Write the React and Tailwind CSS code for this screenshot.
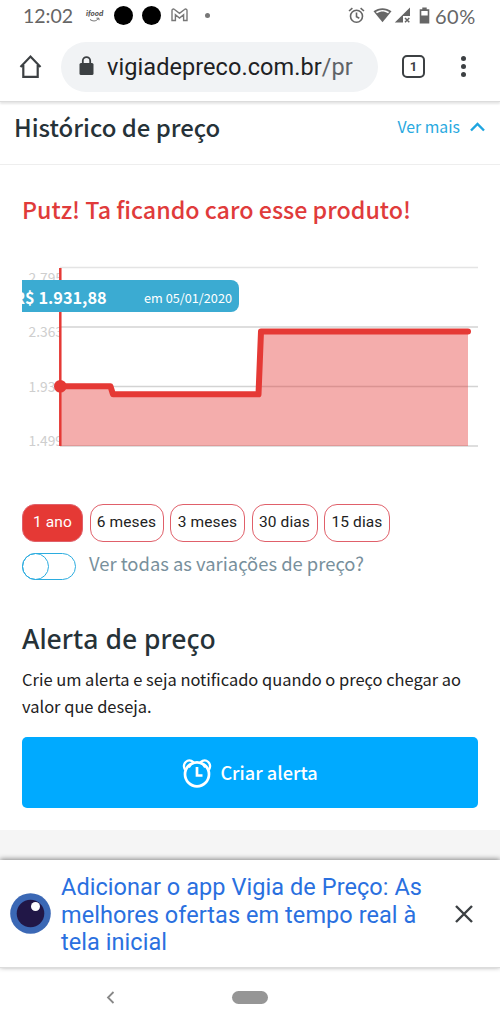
import { useState } from "react";

const periods = [
  { label: "1 ano", width: "w-[61px]" },
  { label: "6 meses", width: "w-[74px]" },
  { label: "3 meses", width: "w-[75px]" },
  { label: "30 dias", width: "w-[66px]" },
  { label: "15 dias", width: "w-[66px]" },
];

// grid lines and their labels
const grid = [
  { y: 267.5, textY: 282.5, label: "2.795", color: "#e4e4e4" },
  { y: 327, textY: 337, label: "2.363", color: "#d3d3d3" },
  { y: 386.5, textY: 392, label: "1.931", color: "#d3d3d3" },
  { y: 446, textY: 445.5, label: "1.499", color: "#d3d3d3" },
];

function StatusBar() {
  return (
    <div className="flex h-[32px] items-center justify-between pl-[23px] pr-[24px] font-['Lato',sans-serif] text-[20px] text-[#666]">
      <div className="flex items-center">
        <span className="w-[63px] pb-[1px] text-[19.500px]">12:02</span>
        <span className="relative flex h-5 w-[28px] flex-col">
          <span className="pt-[1px] text-[8px] leading-[13px] font-black italic text-[#555]">ifood</span>
          <svg className="absolute top-[11px] left-[3px]" width="12" height="5" viewBox="0 0 12 5" fill="none" stroke="#666" strokeWidth="1">
            <path d="M1 2.500C4 4.500 7 4.500 9.500 1.500M7.500 1.200l2.300 0 .3 2" />
          </svg>
        </span>
        <span className="mr-[9px] -mt-[2px] h-[19px] w-[19px] rounded-full bg-black" />
        <span className="-mt-[2px] h-[19px] w-[19px] rounded-full bg-black" />
        <svg className="-mt-[2px] ml-[10px]" width="17" height="14" viewBox="0 0 17 14" fill="none" stroke="#777" strokeWidth="1.400">
          <path d="M1 2.500C1 1 2.500.7 3.500 1.500l5 3.800 5-3.800c1-.8 2.500-.5 2.500 1V12.500h-3.400V6.800L8.500 10 4.400 6.800v5.700H1z" />
        </svg>
        <span className="-mt-[2px] ml-[17px] h-[5px] w-[5px] rounded-full bg-[#777]" />
      </div>
      <div className="flex items-center">
        <svg className="-mt-[2px]" width="17" height="17" viewBox="0 0 17 17" fill="none" stroke="#666" strokeWidth="1.600">
          <circle cx="8.500" cy="9.300" r="6" />
          <path d="M1 4l3.400-2.900M16 4l-3.400-2.900M8.500 5.500v4.200l2.800 1.600" />
        </svg>
        <svg className="-mt-[2px] ml-[8px]" width="19" height="16" viewBox="0 0 19 16">
          <path d="M.5 4.200C6 .1 13 .1 18.500 4.200L9.500 15.300z" fill="#666" />
          <path d="M2.800 4.900C7 2.200 12 2.200 16.200 4.900L15 6.200C11 4 8 4 4 6.200z" fill="#fff" />
        </svg>
        <svg className="-mt-[2px] ml-[2px]" width="17" height="16" viewBox="0 0 17 16">
          <path d="M16 .5V9H9v6.500H.8z" fill="#666" />
          <path d="M11 11l4.300 4.300M15.300 11L11 15.300" stroke="#666" strokeWidth="1.500" />
        </svg>
        <svg className="-mt-[2px] ml-[8px]" width="11" height="17" viewBox="0 0 11 17">
          <path d="M3.300.5h4.400v1.800h2.600v14.200H.7V2.300h2.600z" fill="#666" />
          <path d="M2.300 4h6.400v4.500H2.300z" fill="#fff" />
        </svg>
        <span className="ml-[5px] w-[41px] pb-[1px] whitespace-nowrap tracking-[0.500px]">60%</span>
      </div>
    </div>
  );
}

function AddressBar() {
  return (
    <div className="relative z-10 flex h-[70px] items-center border-b border-[#dcdcdc] bg-white shadow-[0_2px_2px_rgba(0,0,0,0.1)]">
      <svg className="ml-[19px]" width="24" height="25" viewBox="0 0 24 25" fill="none" stroke="#3c4043" strokeWidth="2.200">
        <path d="M1.500 13L11.500 2.600 21.500 13M4.300 11V22.800H18.700V11" />
      </svg>
      <div className="ml-[18px] flex h-[50px] w-[317px] items-center rounded-full bg-[#f1f3f5] pl-[18px]">
        <svg className="-mt-[2px]" width="15" height="20" viewBox="0 0 15 20">
          <rect x=".5" y="7" width="14" height="12" rx="1.500" fill="#3c4043" />
          <path d="M3.800 8V4.800a3.700 3.700 0 017.400 0V8" fill="none" stroke="#3c4043" strokeWidth="1.800" />
        </svg>
        <span className="ml-[13px] pt-[2px] whitespace-nowrap font-['Roboto',sans-serif] text-[23.500px] leading-none tracking-[0.070px] text-[#202124]">
          vigiadepreco.com.br<span className="text-[#5f6368]">/pr</span>
        </span>
      </div>
      <div className="ml-[24px] flex h-[23px] w-[23px] items-center justify-center rounded-[5px] border-[2.500px] border-[#3c4043] font-['Roboto',sans-serif] text-[13px] font-bold text-[#3c4043]">
        1
      </div>
      <div className="ml-[36px] flex flex-col gap-[3px]">
        <span className="h-[5px] w-[5px] rounded-full bg-[#3c4043]" />
        <span className="h-[5px] w-[5px] rounded-full bg-[#3c4043]" />
        <span className="h-[5px] w-[5px] rounded-full bg-[#3c4043]" />
      </div>
    </div>
  );
}

function PriceChart() {
  return (
    <div className="relative mt-[33px] h-[192px]">
      <svg width="456" height="192" viewBox="22 260 456 192">
        <clipPath id="labels">
          <rect x="22" y="260" width="39" height="192" />
        </clipPath>
        <g clipPath="url(#labels)" fill="#cecece" fontSize="13.800" fontFamily="'Noto Sans CJK JP', sans-serif">
          {grid.map((g) => (
            <text key={g.label} x="28.500" y={g.textY}>
              {g.label}
            </text>
          ))}
        </g>
        {grid.map((g) => (
          <path key={g.y} d={`M60 ${g.y}H478`} stroke={g.color} strokeWidth="1.500" />
        ))}
        <path d="M60 386.300H110L113 394.500H258L261 331.500H468V446H60z" fill="#e53935" fillOpacity="0.410" />
        <path d="M60.300 268V446" stroke="#e53935" strokeWidth="2.500" />
        <path
          d="M60 386.300H110.500L113 394.300H258.500L261 331.500H468"
          fill="none"
          stroke="#e53935"
          strokeWidth="6"
          strokeLinecap="round"
          strokeLinejoin="round"
        />
        <circle cx="60.300" cy="386.300" r="6.300" fill="#e53935" />
      </svg>
      {/* tooltip */}
      <div className="absolute top-[20px] left-0 flex h-[32px] w-[217px] items-center justify-between overflow-hidden rounded-r-[8px] bg-[#3babd2] pr-[7px] text-white">
        <span className="-ml-[8px] whitespace-nowrap pt-[2px] text-[16.300px] font-bold">R$ 1.931,88</span>
        <span className="pt-[4px] whitespace-nowrap text-[12.700px]">em 05/01/2020</span>
      </div>
    </div>
  );
}

function InstallBanner() {
  return (
    <div className="relative flex h-[108px] items-center border-b border-[#dcdcdc] bg-white shadow-[0_-1px_5px_rgba(0,0,0,0.450)]">
      <svg className="ml-[10px] shrink-0" width="41" height="41" viewBox="0 0 41 41">
        <circle cx="20.500" cy="20.500" r="20.300" fill="#3b68b5" />
        <circle cx="20.500" cy="20.500" r="13.800" fill="#211747" />
        <circle cx="25.500" cy="13.500" r="4.500" fill="#fff" />
      </svg>
      <p className="ml-[10px] w-[380px] pt-[4px] whitespace-nowrap font-['Roboto',sans-serif] text-[23.500px] leading-[27.500px] tracking-[0.060px] text-[#2a70df]">
        Adicionar o app Vigia de Preço: As
        <br />
        melhores ofertas em tempo real à
        <br />
        tela inicial
      </p>
      <svg className="ml-[14px]" width="18" height="18" viewBox="0 0 18 18" stroke="#3c4043" strokeWidth="2.400">
        <path d="M1 1l16 16M17 1L1 17" />
      </svg>
    </div>
  );
}

export default function App() {
  const [period, setPeriod] = useState("1 ano");

  return (
    <div className="h-[1028px] w-[500px] overflow-hidden bg-white font-['Noto_Sans_CJK_JP',sans-serif]">
      <StatusBar />
      <AddressBar />

      {/* section header */}
      <div className="flex h-[63px] items-start justify-between border-b border-[#eee] pt-[9px] pr-[15px] pl-[14px]">
        <h2 className="whitespace-nowrap text-[23.900px] leading-[32px] font-medium text-[#263238]">
          Histórico de preço
        </h2>
        <span className="flex items-center text-[15.800px] leading-[32px] whitespace-nowrap text-[#29a9e0]">
          Ver mais
          <svg className="ml-[10px]" width="15" height="10" viewBox="0 0 15 10" fill="none" stroke="#1fa5e0" strokeWidth="2.400">
            <path d="M1 8.500L7.500 2 14 8.500" />
          </svg>
        </span>
      </div>

      <div className="px-[22px]">
        <h3 className="mt-[26px] text-[23.250px] leading-[36px] font-medium whitespace-nowrap text-[#e03b3b]">
          Putz! Ta ficando caro esse produto!
        </h3>
        <PriceChart />

        <div className="mt-[52px] flex gap-[6.500px] font-['Roboto',sans-serif] text-[15.500px] tracking-[0.100px]">
          {periods.map((p) => (
            <button
              key={p.label}
              onClick={() => setPeriod(p.label)}
              className={`h-[38px] rounded-[13px] border border-[#e0606a] whitespace-nowrap ${p.width} ${
                p.label === period ? "bg-[#e53935] text-white" : "bg-white text-[#212121]"
              }`}
            >
              {p.label}
            </button>
          ))}
        </div>

        <div className="mt-[11px] flex h-[26px] items-center">
          <span className="h-[27px] w-[54px] shrink-0 rounded-full border border-[#2bacdf]">
            <span className="-mt-px -ml-px block h-[27px] w-[27px] rounded-full border border-[#2bacdf]" />
          </span>
          <span className="ml-[13px] pb-[4px] text-[18.400px] whitespace-nowrap text-[#78909c]">
            Ver todas as variações de preço?
          </span>
        </div>

        <h2 className="mt-[42px] font-['Noto_Sans',sans-serif] text-[26.600px] leading-[36px] font-medium whitespace-nowrap text-[#263238]">
          Alerta de preço
        </h2>
        <p className="mt-[9px] text-[16.470px] leading-[26.500px] whitespace-nowrap text-[#212121]">
          Crie um alerta e seja notificado quando o preço chegar ao
          <br />
          valor que deseja.
        </p>
        <button className="mt-[18px] flex h-[71px] w-full items-center justify-center rounded-[5px] bg-[#00aaff] text-[18.200px] font-medium text-white">
          <svg className="mr-[8px]" width="30" height="30" viewBox="0 0 30 30" fill="none" stroke="#fff" strokeWidth="2.700">
            <circle cx="15" cy="16.300" r="12" />
            <path d="M3.200 12.200C-.5 6 5.500-.8 11.800 4.300M18.200 4.300C24.500-.8 30.500 6 26.800 12.200" strokeWidth="2.300" />
            <path d="M7 9.500C8 7.500 10 5.500 12 4.800M23 9.500C22 7.500 20 5.500 18 4.800" strokeWidth="1.800" />
            <path d="M15 9v8.500h5.500" />
          </svg>
          Criar alerta
        </button>
      </div>

      <div className="mt-[22px] h-[30px] bg-[#f5f5f5]" />
      <InstallBanner />

      {/* system navigation */}
      <div className="flex h-[58px] items-center">
        <svg className="ml-[106px]" width="9" height="13" viewBox="0 0 9 13" fill="none" stroke="#888" strokeWidth="1.800">
          <path d="M7.500 1L2 6.500l5.500 5.500" />
        </svg>
        <span className="ml-[117px] h-[13px] w-[36px] rounded-full bg-[#969696]" />
      </div>
    </div>
  );
}
